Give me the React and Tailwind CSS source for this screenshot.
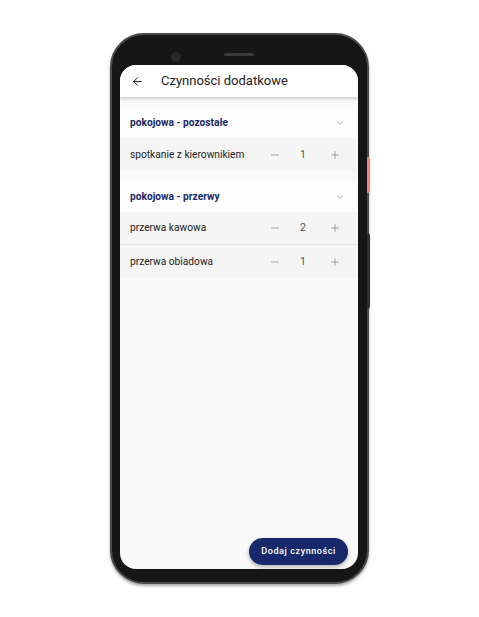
import { ArrowLeft, ChevronDown, Minus, Plus } from 'lucide-react';

const sections = [
  {
    title: 'pokojowa - pozostałe',
    items: [{ name: 'spotkanie z kierownikiem', count: 1 }],
  },
  {
    title: 'pokojowa - przerwy',
    items: [
      { name: 'przerwa kawowa', count: 2 },
      { name: 'przerwa obiadowa', count: 1 },
    ],
  },
];

const Row = ({ name, count, last }) => (
  <div className={`flex items-center h-[33px] bg-[#f5f5f5] pl-[10px] ${last ? '' : 'border-b border-[#e8e8e8]'}`}>
    <span className="flex-1 text-[10.2px] text-[#222]">{name}</span>
    <Minus size={12} strokeWidth={1.3} className="text-[#777] mr-[12px]" />
    <span className="w-[20px] text-center text-[10.5px] text-[#555]">{count}</span>
    <Plus size={12} strokeWidth={1.3} className="text-[#777] ml-[16px] mr-[17px]" />
  </div>
);

const App = () => {
  return (
    <div className="w-[479px] h-[617px] bg-white pt-[33px] pl-[110px] font-['Roboto',sans-serif]">
      {/* phone body */}
      <div className="relative w-[259px] h-[551px] rounded-[34px] bg-[#161616] border-[2px] border-[#4a4a4a] pt-[30px] pl-[8px] pr-[9px] pb-[13px] shadow-[0_2px_3px_rgba(0,0,0,0.35)]">
        <div className="absolute right-[-3px] top-[122px] w-[3px] h-[36px] bg-[#e9856a] rounded-r-sm" />
        <div className="absolute right-[-3px] top-[198px] w-[3px] h-[76px] bg-[#2e2e2e] rounded-r-sm" />
        <div className="absolute left-[59px] top-[17px] w-[10px] h-[10px] rounded-full bg-[#2a2a2a]" />
        <div className="absolute left-[112px] top-[18px] w-[30px] h-[3px] rounded-full bg-[#3a3a3a]" />

        {/* screen */}
        <div className="relative w-full h-full rounded-[16px] bg-[#fafafa] overflow-hidden flex flex-col">
          <div className="h-[32px] shrink-0 bg-white flex items-center shadow-[0_2px_3px_rgba(0,0,0,0.18)] z-10">
            <ArrowLeft size={13} strokeWidth={1.8} className="ml-[11px] text-[#222]" />
            <span className="ml-[17px] text-[13px] text-[#222]">Czynności dodatkowe</span>
          </div>

          <div className="pt-[10px] flex flex-col">
            {sections.map((s, si) => (
              <div key={s.title} className={si > 0 ? 'mt-[10px]' : ''}>
                <div className="h-[31px] flex items-center pl-[10px] pr-[13px] bg-[#fcfcfc]">
                  <span className="flex-1 text-[10.2px] font-bold text-[#1b2a66]">{s.title}</span>
                  <ChevronDown size={10} strokeWidth={1.4} className="text-[#777]" />
                </div>
                {s.items.map((it, i) => (
                  <Row key={it.name} {...it} last={i === s.items.length - 1} />
                ))}
              </div>
            ))}
          </div>

          <button className="absolute right-[10px] bottom-[4px] h-[27px] px-[12px] rounded-full bg-[#17296b] text-white text-[9px] font-medium tracking-[0.6px] shadow-[0_2px_4px_rgba(0,0,0,0.3)]">
            Dodaj czynności
          </button>
        </div>
      </div>
    </div>
  );
};

export default App;
